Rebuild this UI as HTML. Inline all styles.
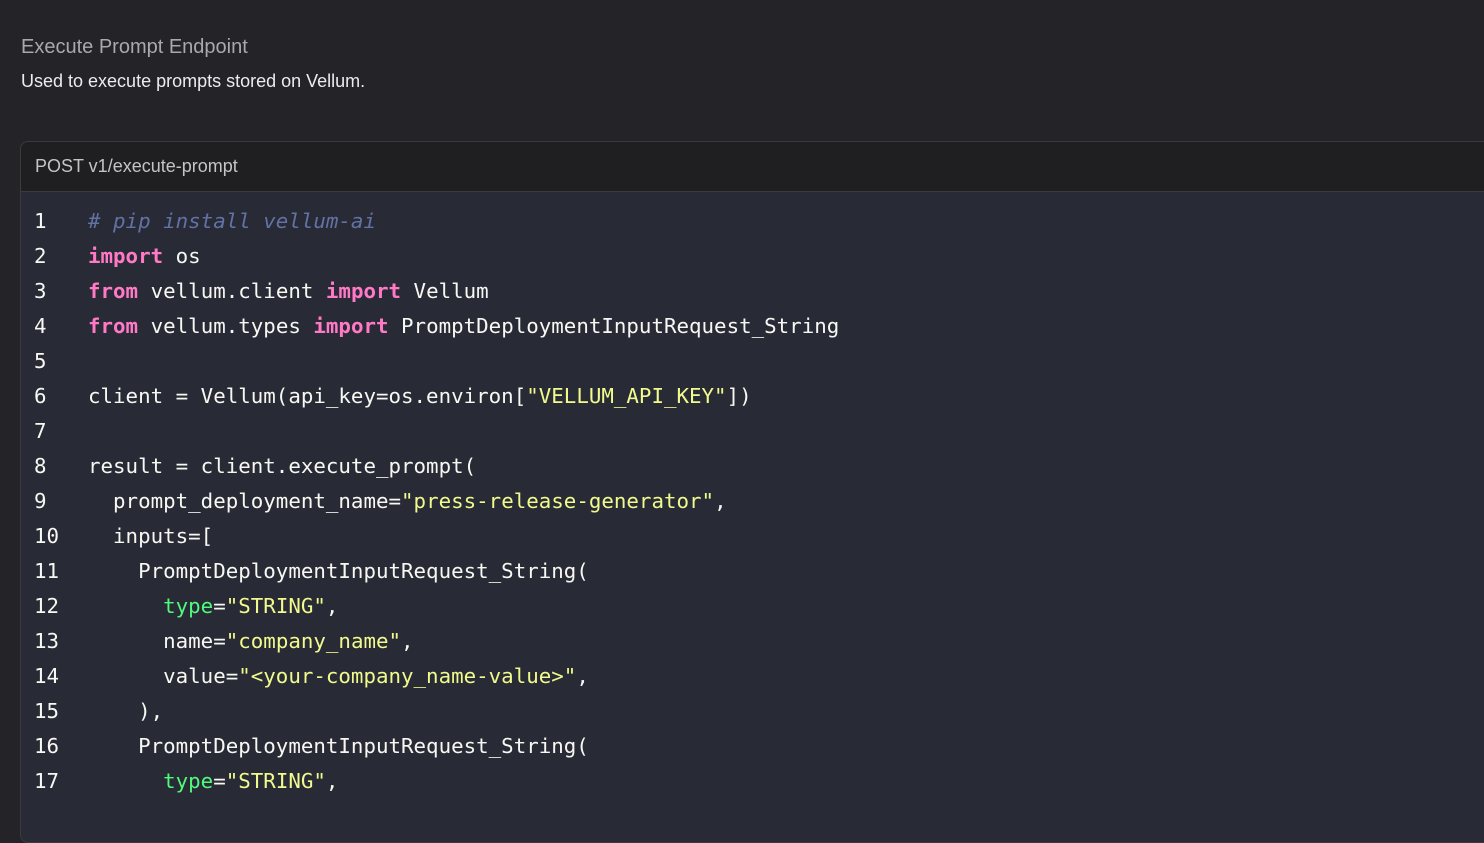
<!DOCTYPE html>
<html><head><meta charset="utf-8"><style>
body{margin:0;width:1484px;height:798px;background:#242428;overflow:hidden;font-family:"Liberation Sans",sans-serif;}
.t{position:absolute;left:21px;top:36px;font-size:20px;color:#a9a9ad;}
.s{position:absolute;left:21px;top:71px;font-size:18px;color:#ececee;}
.card{position:absolute;left:20px;top:141px;width:1480px;height:700px;border:1px solid #3a3a3f;border-radius:8px;overflow:hidden;background:#282a36;}
.hd{height:49px;background:#1f1f22;border-bottom:1px solid #3a3a3f;color:#c4c4c8;font-size:18px;line-height:49px;padding-left:14px;}
pre{margin:0;padding-top:12px;font-family:"DejaVu Sans Mono","Liberation Mono",monospace;font-size:20.8px;line-height:35px;color:#f8f8f2;}
.l{display:block;white-space:pre;}
.n{display:inline-block;width:54px;padding-left:13px;color:#f8f8f2;}
.c{color:#6272a4;font-style:italic}.k{color:#ff79c6;font-weight:bold}.str{color:#f1fa8c}.g{color:#50fa7b}
</style></head><body>
<div class="t">Execute Prompt Endpoint</div>
<div class="s">Used to execute prompts stored on Vellum.</div>
<div class="card"><div class="hd">POST v1/execute-prompt</div>
<pre><span class="l"><span class="n">1</span><span class="c"># pip install vellum-ai</span></span><span class="l"><span class="n">2</span><span class="k">import</span> os</span><span class="l"><span class="n">3</span><span class="k">from</span> vellum.client <span class="k">import</span> Vellum</span><span class="l"><span class="n">4</span><span class="k">from</span> vellum.types <span class="k">import</span> PromptDeploymentInputRequest_String</span><span class="l"><span class="n">5</span></span><span class="l"><span class="n">6</span>client = Vellum(api_key=os.environ[<span class="str">"VELLUM_API_KEY"</span>])</span><span class="l"><span class="n">7</span></span><span class="l"><span class="n">8</span>result = client.execute_prompt(</span><span class="l"><span class="n">9</span>  prompt_deployment_name=<span class="str">"press-release-generator"</span>,</span><span class="l"><span class="n">10</span>  inputs=[</span><span class="l"><span class="n">11</span>    PromptDeploymentInputRequest_String(</span><span class="l"><span class="n">12</span>      <span class="g">type</span>=<span class="str">"STRING"</span>,</span><span class="l"><span class="n">13</span>      name=<span class="str">"company_name"</span>,</span><span class="l"><span class="n">14</span>      value=<span class="str">"&lt;your-company_name-value&gt;"</span>,</span><span class="l"><span class="n">15</span>    ),</span><span class="l"><span class="n">16</span>    PromptDeploymentInputRequest_String(</span><span class="l"><span class="n">17</span>      <span class="g">type</span>=<span class="str">"STRING"</span>,</span></pre>
</div>
</body></html>
